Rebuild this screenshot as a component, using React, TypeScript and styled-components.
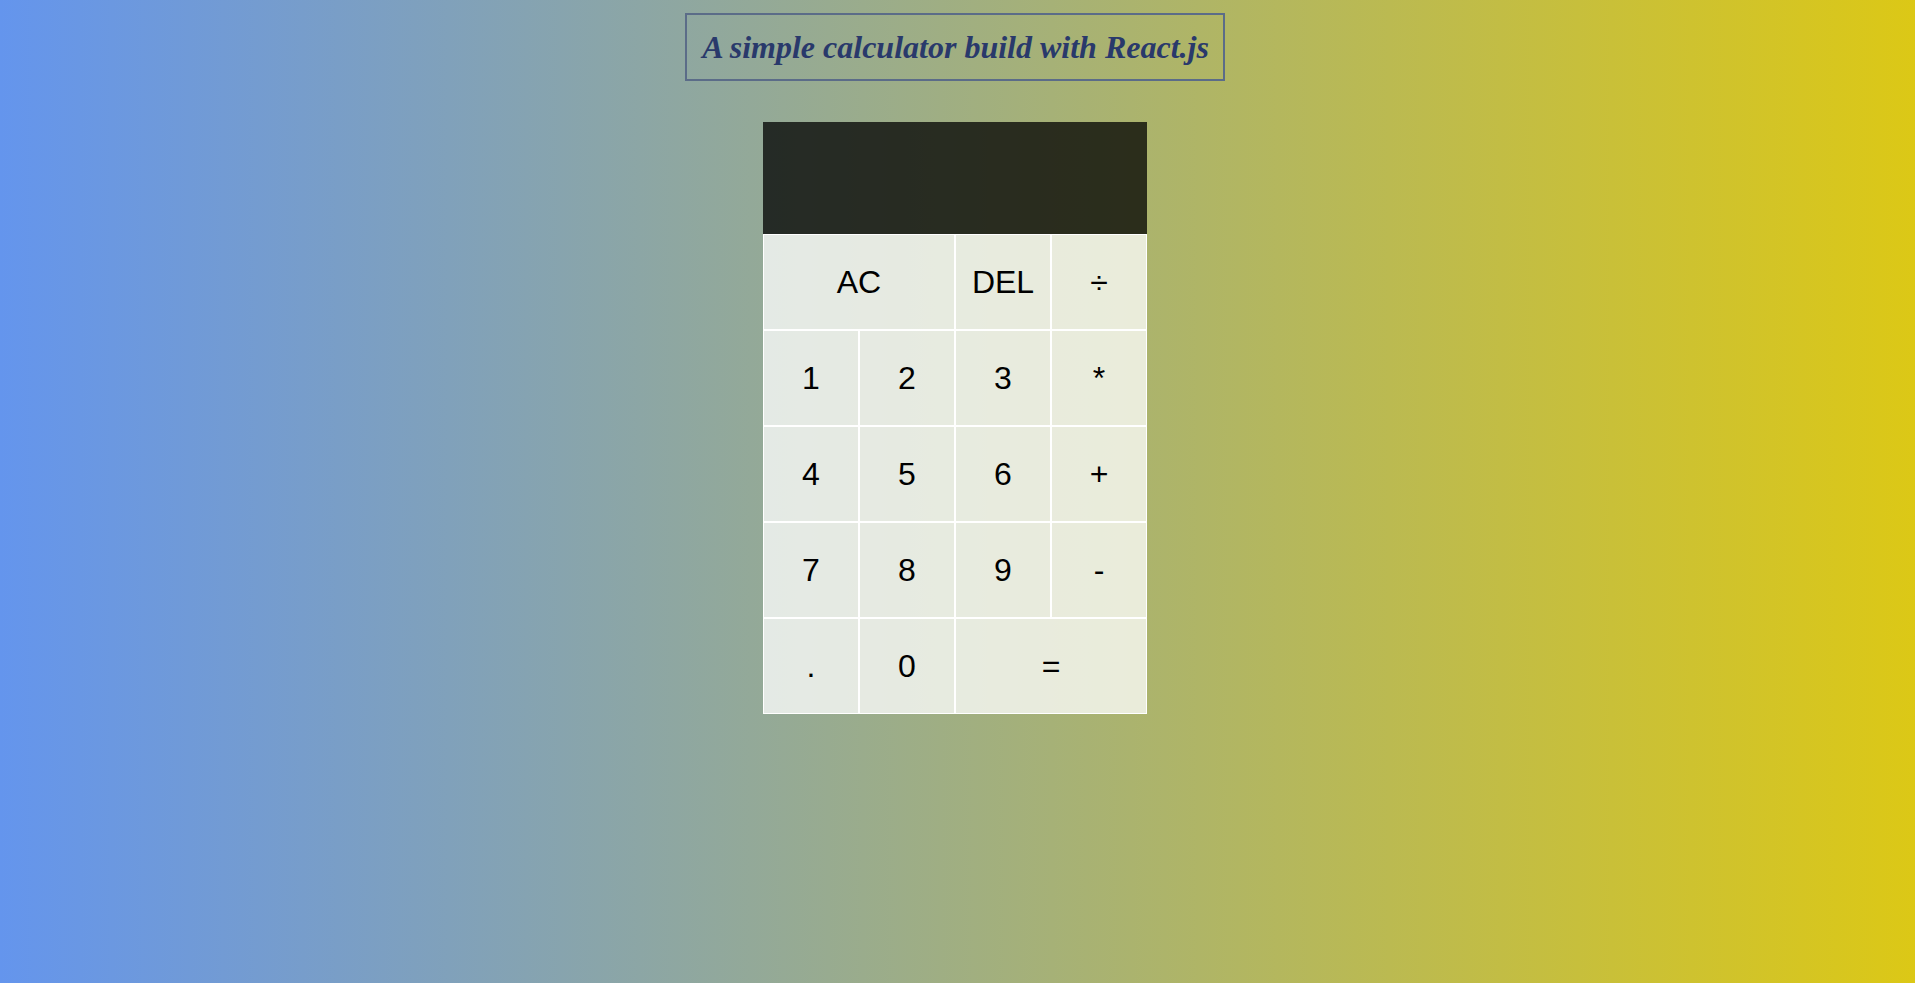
import React from "react";
import styled, { createGlobalStyle } from "styled-components";

const GlobalStyle = createGlobalStyle`
  *, *::before, *::after { box-sizing: border-box; }
  html, body { margin: 0; padding: 0; }
  body {
    min-height: 100vh;
    background: linear-gradient(to right, #6495ed, #dcc816);
    font-family: "Liberation Sans", Arial, sans-serif;
  }
`;

const Page = styled.div`
  display: flex;
  flex-direction: column;
  align-items: center;
  padding: 13px 5px 0 0;
`;

const Title = styled.h1`
  margin: 0 0 41px;
  padding: 13px 14px 13px 15px;
  border: 2px solid #5b6c88;
  font-family: "Liberation Serif", "Times New Roman", serif;
  font-style: italic;
  font-weight: bold;
  font-size: 32px;
  line-height: 38px;
  color: #29396b;
`;

const Grid = styled.div`
  display: grid;
  grid-template-columns: repeat(4, 96px);
  grid-template-rows: minmax(112px, auto) repeat(5, 96px);
`;

const Display = styled.div`
  grid-column: 1 / -1;
  background: rgba(0, 0, 0, 0.75);
`;

const Key = styled.button<{ $span?: number }>`
  grid-column: span ${(p) => p.$span ?? 1};
  margin: 0;
  padding: 0;
  cursor: pointer;
  font-family: "Liberation Sans", Arial, sans-serif;
  font-size: 32px;
  color: #000;
  border: 1px solid #fff;
  outline: none;
  background: rgba(255, 255, 255, 0.75);
`;

const keys: { label: string; span?: number }[] = [
  { label: "AC", span: 2 },
  { label: "DEL" },
  { label: "÷" },
  { label: "1" },
  { label: "2" },
  { label: "3" },
  { label: "*" },
  { label: "4" },
  { label: "5" },
  { label: "6" },
  { label: "+" },
  { label: "7" },
  { label: "8" },
  { label: "9" },
  { label: "-" },
  { label: "." },
  { label: "0" },
  { label: "=", span: 2 },
];

export default function App() {
  return (
    <>
      <GlobalStyle />
      <Page>
        <Title>A simple calculator build with React.js</Title>
        <Grid>
          <Display />
          {keys.map((k) => (
            <Key key={k.label} $span={k.span}>
              {k.label}
            </Key>
          ))}
        </Grid>
      </Page>
    </>
  );
}
